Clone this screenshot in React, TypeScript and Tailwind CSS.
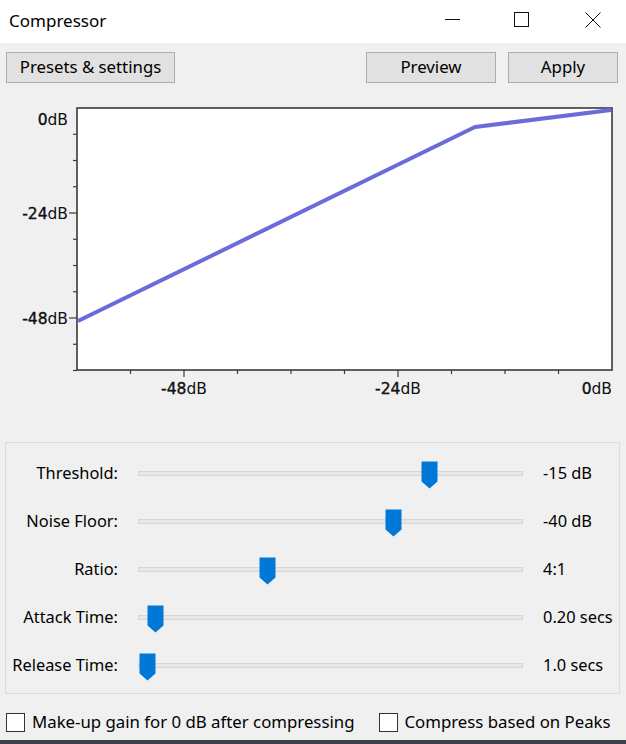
const sliders = [
  { label: "Threshold:", value: "-15 dB", left: 282 },
  { label: "Noise Floor:", value: "-40 dB", left: 246 },
  { label: "Ratio:", value: "4:1", left: 120 },
  { label: "Attack Time:", value: "0.20 secs", left: 8 },
  { label: "Release Time:", value: "1.0 secs", left: 0 },
];

const yTicks = Array.from({ length: 11 }, (_, k) => 108 + k * 26.25);
const xTicks = Array.from({ length: 11 }, (_, k) => 77 + k * 53.5);

function Thumb({ left }: { left: number }) {
  return (
    <svg className="absolute top-[-11px]" style={{ left }} width="17" height="28" viewBox="0 0 17 28">
      <path d="M0.5 0.5 H16.5 V20.5 L8.5 27.5 L0.5 20.5 Z" fill="#0078d7" />
    </svg>
  );
}

function Chart() {
  return (
    <svg width="626" height="320" viewBox="0 92 626 320" className="block">
      <rect x="77" y="108" width="535" height="262" fill="#ffffff" stroke="#3a3a3a" strokeWidth="1.6" />
      {yTicks.map((y, k) =>
        k === 0 ? null : (
          <line key={k} x1={k % 4 === 0 ? 69 : 73} x2="77" y1={y} y2={y} stroke="#3a3a3a" strokeWidth="1.2" />
        )
      )}
      {xTicks.map((x, k) =>
        k === 0 || k === 10 ? null : (
          <line key={k} x1={x} x2={x} y1="370" y2={k % 4 === 2 ? 377 : 374} stroke="#3a3a3a" strokeWidth="1.2" />
        )
      )}
      <polyline points="78,321 475,127 611,110" fill="none" stroke="#6b6bd9" strokeWidth="4" strokeLinejoin="round" />
      <g fontFamily="'DejaVu Sans', sans-serif" fontSize="15.5" fill="#111">
        <text x="68" y="125" textAnchor="end"><tspan stroke="#111" strokeWidth="0.4">0</tspan>dB</text>
        <text x="68" y="219" textAnchor="end"><tspan stroke="#111" strokeWidth="0.4">-24</tspan>dB</text>
        <text x="68" y="324" textAnchor="end"><tspan stroke="#111" strokeWidth="0.4">-48</tspan>dB</text>
        <text x="184" y="394" textAnchor="middle"><tspan stroke="#111" strokeWidth="0.4">-48</tspan>dB</text>
        <text x="398" y="394" textAnchor="middle"><tspan stroke="#111" strokeWidth="0.4">-24</tspan>dB</text>
        <text x="612" y="394" textAnchor="end"><tspan stroke="#111" strokeWidth="0.4">0</tspan>dB</text>
      </g>
    </svg>
  );
}

export default function App() {
  return (
    <div className="w-[626px] h-[744px] bg-[#f0f0f0] flex flex-col font-['Noto_Sans',sans-serif] text-black overflow-hidden">
      <div className="h-[43px] bg-white flex items-center shrink-0">
        <span className="pl-[9px] text-[17px] pb-[2px]">Compressor</span>
        <div className="ml-auto flex items-center h-full pb-[4px]">
          <div className="w-[15px] h-px bg-[#111] mr-[54px]" />
          <div className="w-[15px] h-[15px] border border-[#111] mr-[56px]" />
          <svg width="16" height="16" viewBox="0 0 16 16" className="mr-[25px]">
            <path d="M0.5 0.5 L15.5 15.5 M15.5 0.5 L0.5 15.5" stroke="#111" strokeWidth="1" />
          </svg>
        </div>
      </div>

      <div className="flex mt-[9px] px-[6px] shrink-0">
        <button className="w-[169px] h-[31px] bg-[#e1e1e1] border border-[#adadad] text-[16.8px] leading-none">
          Presets &amp; settings
        </button>
        <button className="ml-auto w-[130px] h-[31px] bg-[#e1e1e1] border border-[#adadad] text-[16.8px] leading-none">
          Preview
        </button>
        <button className="ml-[12px] mr-[2px] w-[110px] h-[31px] bg-[#e1e1e1] border border-[#adadad] text-[16.8px] leading-none">
          Apply
        </button>
      </div>

      <div className="mt-[9px] shrink-0">
        <Chart />
      </div>

      <div className="mt-[30px] ml-[5px] w-[615px] h-[252px] border border-[#dcdcdc] pt-[6px] shrink-0">
        {sliders.map((s) => (
          <div key={s.label} className="h-[48px] flex items-center text-[16.4px]">
            <span className="w-[112px] text-right whitespace-nowrap">{s.label}</span>
            <div className="relative ml-[20px] w-[385px] h-[5px] bg-[#e7e7e7] border border-[#d6d6d6]">
              <Thumb left={s.left} />
            </div>
            <span className="ml-[20px]">{s.value}</span>
          </div>
        ))}
      </div>

      <div className="mt-[18px] flex items-center h-[20px] text-[16.8px] shrink-0 whitespace-nowrap">
        <div className="ml-[6px] w-[19px] h-[19px] border border-[#333] bg-white" />
        <span className="ml-[7px]">Make-up gain for 0 dB after compressing</span>
        <div className="ml-[25px] w-[19px] h-[19px] border border-[#333] bg-white" />
        <span className="ml-[6px]">Compress based on Peaks</span>
      </div>

      <div className="mt-auto h-[4px] bg-[#3b3f4a] shrink-0" />
    </div>
  );
}
